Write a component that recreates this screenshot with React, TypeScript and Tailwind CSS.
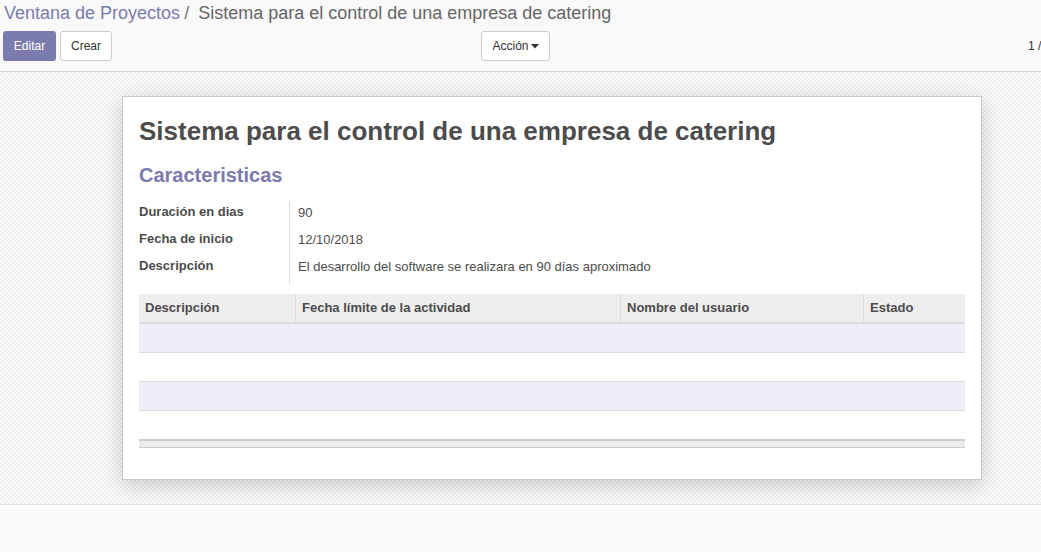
const fields = [
  { label: 'Duración en dias', value: '90' },
  { label: 'Fecha de inicio', value: '12/10/2018' },
  { label: 'Descripción', value: 'El desarrollo del software se realizara en 90 días aproximado' },
];

const columns = [
  { name: 'Descripción', w: 'w-[157px]' },
  { name: 'Fecha límite de la actividad', w: 'w-[325px]' },
  { name: 'Nombre del usuario', w: 'w-[243px]' },
  { name: 'Estado', w: 'flex-1' },
];

export default function App() {
  return (
    <div className="flex flex-col h-[552px] w-[1041px] overflow-hidden bg-[#f9f9f9] text-[#4c4c4c] font-['Liberation_Sans',Arial,sans-serif]">
      {/* Control panel */}
      <div className="h-[72px] shrink-0 border-b border-[#cfcfcf] bg-[#f9f9f9] pl-[3px]">
        <div className="h-[31px] pt-[2px] pl-[1px] text-[18px] leading-[22px] whitespace-nowrap">
          <span className="text-[#7c7bad]">Ventana de Proyectos</span>
          <span className="text-[#777] pl-[4px] pr-[9px]">/</span>
          <span className="text-[#666]">Sistema para el control de una empresa de catering</span>
        </div>
        <div className="flex items-center h-[30px]">
          <button className="h-[30px] w-[53px] shrink-0 rounded-[3px] bg-[#7c7bad] text-white text-[12px]">Editar</button>
          <button className="ml-[4px] h-[30px] w-[52px] shrink-0 rounded-[3px] border border-[#ccc] bg-white text-[#333] text-[12px]">Crear</button>
          <button className="ml-[369px] h-[30px] w-[69px] shrink-0 rounded-[3px] border border-[#ccc] bg-white text-[#333] text-[12px] flex items-center justify-center gap-[2px]">
            Acción
            <svg width="8" height="5" viewBox="0 0 8 5" className="mt-[1px]"><path d="M0 0h8L4 4.5z" fill="#333" /></svg>
          </button>
          <div className="ml-[478px] shrink-0 text-[12px] text-[#333] whitespace-nowrap">1 / 1</div>
        </div>
      </div>

      {/* Sheet background */}
      <div className="h-[433px] shrink-0 border-b border-[#e2e2e2] bg-[repeating-conic-gradient(#efefef_0_25%,#fbfbfb_0_50%)] bg-[length:4px_4px] pt-[24px] pl-[122px]">
        <div className="w-[860px] h-[384px] border border-[#c8c8d0] bg-white shadow-[0_5px_20px_-1px_rgba(0,0,0,0.2)] px-[16px] pt-[18px]">
          <h1 className="text-[26px] leading-[32px] font-bold text-[#4c4c4c]">Sistema para el control de una empresa de catering</h1>
          <h2 className="mt-[15px] text-[20px] leading-[26px] font-bold text-[#7c7bad]">Caracteristicas</h2>
          <div className="mt-[14px] flex">
            <div className="w-[150px] flex flex-col gap-[10px] pt-[1px]">
              {fields.map((f) => (
                <div key={f.label} className="h-[17px] text-[13px] leading-[17px] font-bold text-[#4c4c4c]">{f.label}</div>
              ))}
            </div>
            <div className="border-l border-[#ddd] pl-[8px] pt-[2px] pb-[9px] flex flex-col gap-[10px]">
              {fields.map((f) => (
                <div key={f.label} className="h-[17px] text-[13px] leading-[17px] text-[#4c4c4c]">{f.value}</div>
              ))}
            </div>
          </div>

          {/* One2many table */}
          <div className="mt-[10px] w-[826px]">
            <div className="flex h-[30px] bg-[#eee] border-b-2 border-[#ddd]">
              {columns.map((c, i) => (
                <div key={c.name} className={`${c.w} px-[6px] text-[13px] leading-[28px] font-bold text-[#4c4c4c] ${i < columns.length - 1 ? 'border-r border-[#ddd]' : ''}`}>{c.name}</div>
              ))}
            </div>
            <div className="h-[29px] bg-[#eeeef6] border-b border-[#ddd]" />
            <div className="h-[29px] bg-white border-b border-[#ddd]" />
            <div className="h-[29px] bg-[#eeeef6] border-b border-[#ddd]" />
            <div className="h-[28px] bg-white" />
            <div className="h-[9px] bg-[#eee] border-t-2 border-b border-[#ccc]" />
          </div>
        </div>
      </div>
      <div className="flex-1 bg-[#f9f9f9]" />
    </div>
  );
}
